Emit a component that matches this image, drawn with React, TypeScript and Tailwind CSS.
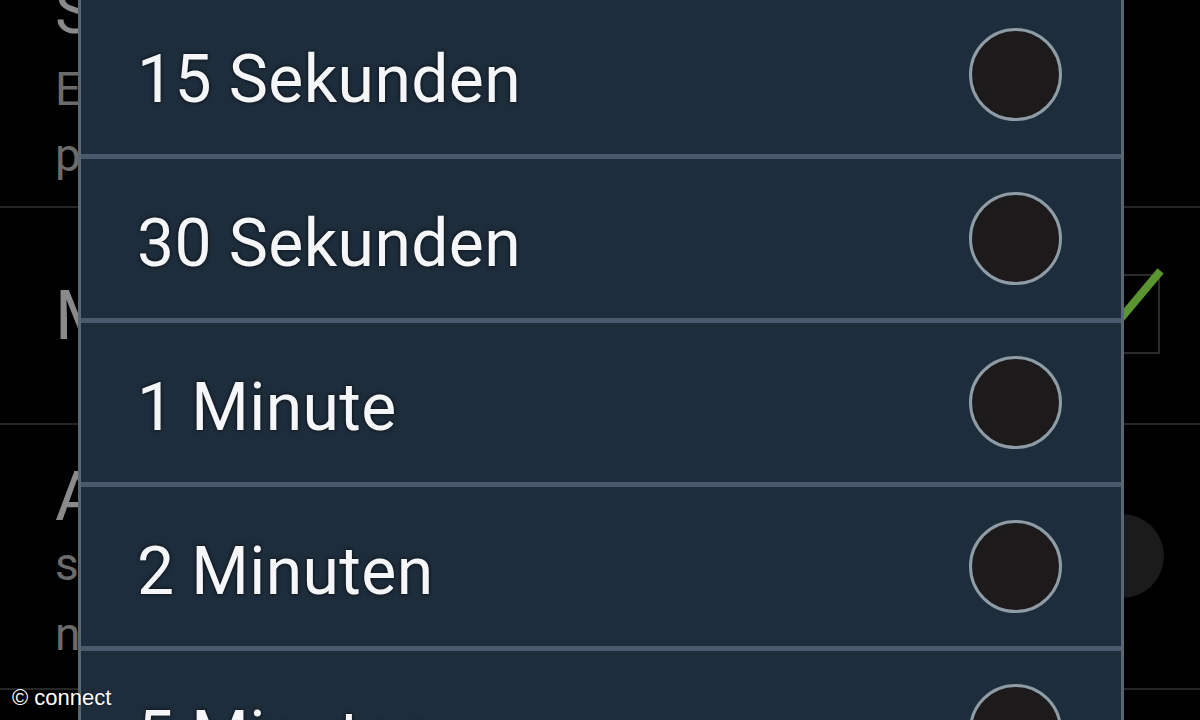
import React from 'react';

const options = ['15 Sekunden', '30 Sekunden', '1 Minute', '2 Minuten', '5 Minuten'];

function SettingsBehind() {
  return (
    <div className="flex flex-col w-full">
      {/* row 1 */}
      <div className="h-[208px] border-b-2 border-[#262626] pl-[55px] overflow-hidden">
        <div className="text-[64px] leading-none text-[#8a8a8a] -mt-[20px] whitespace-nowrap">Smart stay</div>
        <div className="text-[46px] leading-[66px] text-[#6b6b6b] mt-[12px] whitespace-nowrap">
          <div>Erkennt, ob Sie auf den Bildschirm</div>
          <div>passen und hält ihn eingeschaltet</div>
        </div>
      </div>
      {/* row 2 */}
      <div className="h-[217px] border-b-2 border-[#262626] pl-[55px] pr-[40px] flex items-center justify-between">
        <div className="text-[68px] leading-none text-[#8a8a8a] -mt-[0px] whitespace-nowrap">Modus für Bildschirm</div>
        <div className="relative w-[40px] h-[80px] border-2 border-[#2b2b2b] -mt-[4px]">
          <svg className="absolute -left-[10px] -top-[8px]" width="52" height="64" viewBox="0 0 52 64">
            <path d="M4 56 L46 6" stroke="#5a9532" strokeWidth="8" strokeLinecap="square" />
          </svg>
        </div>
      </div>
      {/* row 3 */}
      <div className="h-[265px] border-b-2 border-[#262626] pl-[55px] pr-[36px] flex items-start justify-between">
        <div className="whitespace-nowrap">
          <div className="text-[68px] leading-none text-[#8a8a8a] mt-[38px]">Automatische Helligkeit</div>
          <div className="text-[46px] leading-[70px] text-[#6b6b6b] -mt-[2px]">
            <div>stellt die Helligkeit des Bildschirms</div>
            <div>nach Umgebungslicht ein</div>
          </div>
        </div>
        <div className="w-[84px] h-[84px] rounded-full bg-[#1b1b1b] mt-[89px] flex items-center justify-center">
          <span className="text-[#9aa] text-[22px] -ml-[14px]">›</span>
        </div>
      </div>
    </div>
  );
}

export default function App() {
  return (
    <div
      className="relative w-[1200px] h-[720px] bg-black overflow-hidden"
      style={{ fontFamily: 'Roboto, "Noto Sans", sans-serif' }}
    >
      <SettingsBehind />

      {/* timeout dialog */}
      <div className="absolute left-[78px] top-[-5px] w-[1046px] bg-[#1e2d3c] border-x-[3px] border-[#586772]">
        {options.map((opt) => (
          <div
            key={opt}
            className="h-[164px] border-b-[5px] border-[#485a6b] flex items-center justify-between pl-[56px] pr-[59px]"
          >
            <span
              className="text-[66px] leading-none text-[#f4f6f8] tracking-[0.4px] mt-[10px]"
              style={{ textShadow: '0 0 4px rgba(0,0,0,0.8)' }}
            >
              {opt}
            </span>
            <span className="w-[93px] h-[93px] rounded-full bg-[#1c1a1b] border-[3px] border-[#8e9ca6]" />
          </div>
        ))}
      </div>

      <div
        className="absolute left-[12px] top-[687px] text-[22px] text-white leading-none"
        style={{ fontFamily: '"Liberation Sans", Arial, sans-serif', textShadow: '0 0 2px rgba(0,0,0,0.8)' }}
      >
        © connect
      </div>
    </div>
  );
}
